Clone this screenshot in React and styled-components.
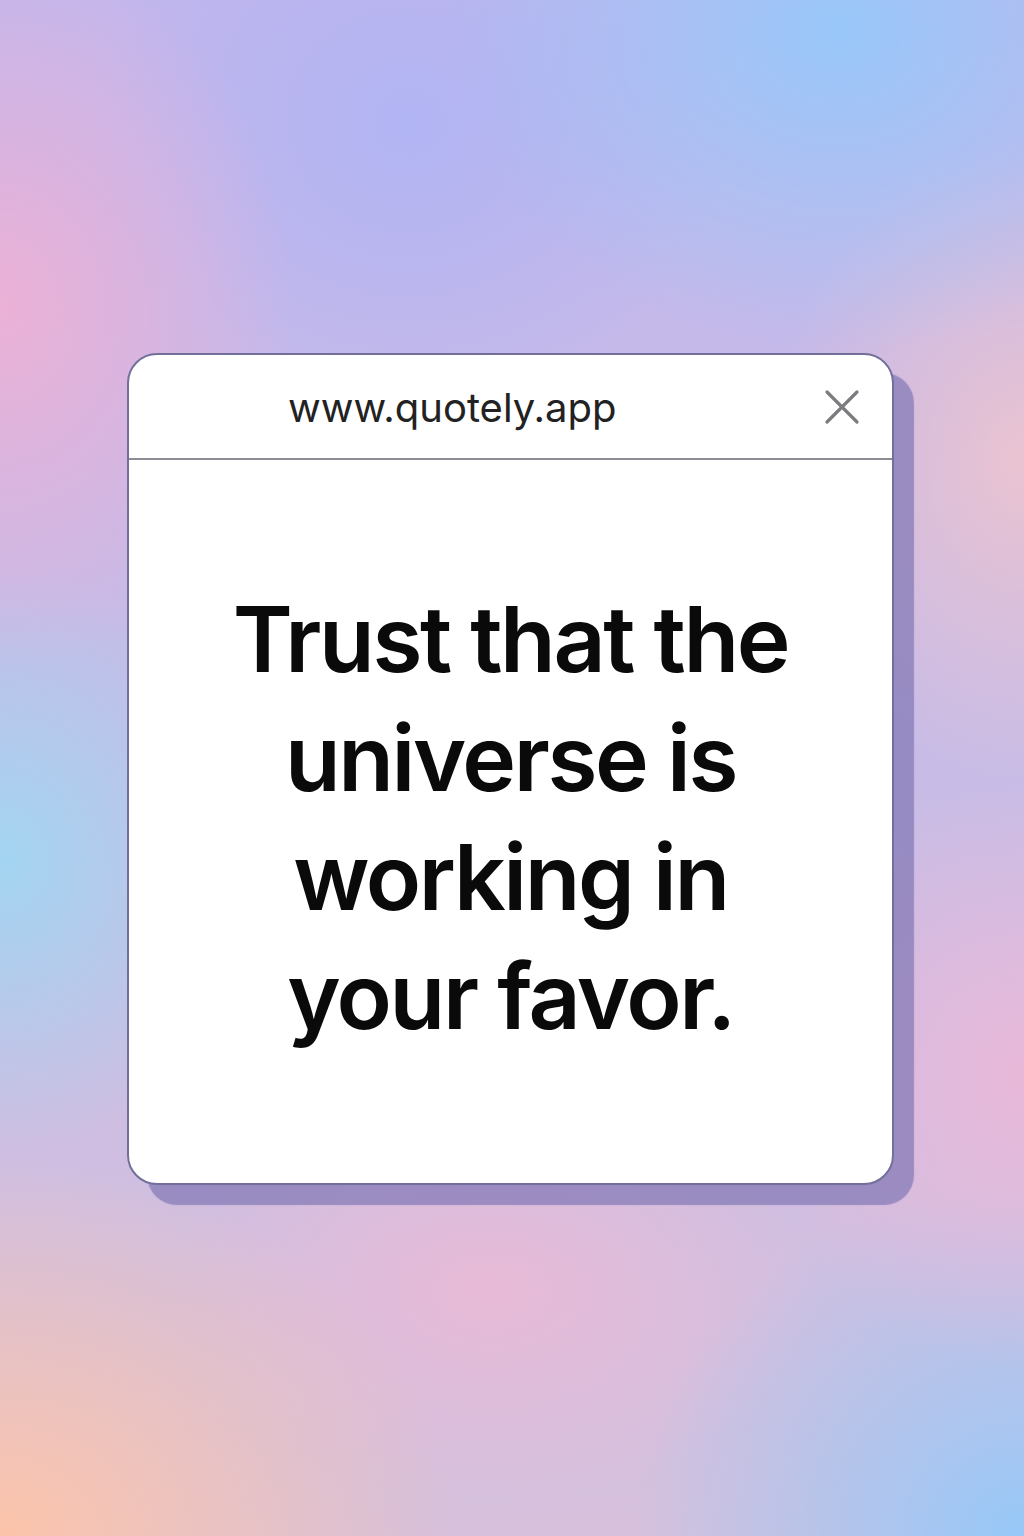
import styled, { createGlobalStyle } from "styled-components";

const GlobalStyle = createGlobalStyle`
  html, body {
    margin: 0;
    padding: 0;
  }
  body {
    font-family: Inter, "Noto Sans", "Liberation Sans", sans-serif;
  }
`;

const Page = styled.div`
  width: 1024px;
  height: 1536px;
  box-sizing: border-box;
  padding: 353px 3px 0 0;
  display: flex;
  justify-content: center;
  align-items: flex-start;
  background:
    radial-gradient(ellipse 420px 520px at 0% 20%, rgba(240, 176, 212, 0.9), transparent 70%),
    radial-gradient(ellipse 380px 420px at 0% 56%, rgba(160, 214, 242, 0.95), transparent 70%),
    radial-gradient(ellipse 640px 520px at 0% 100%, rgba(252, 196, 170, 1), transparent 72%),
    radial-gradient(ellipse 560px 460px at 82% 2%, rgba(150, 200, 250, 0.95), transparent 70%),
    radial-gradient(ellipse 360px 460px at 100% 30%, rgba(238, 196, 206, 0.9), transparent 70%),
    radial-gradient(ellipse 380px 420px at 100% 70%, rgba(236, 184, 216, 0.9), transparent 70%),
    radial-gradient(ellipse 560px 500px at 100% 100%, rgba(150, 200, 248, 1), transparent 70%),
    radial-gradient(ellipse 460px 300px at 48% 84%, rgba(236, 186, 214, 0.85), transparent 70%),
    radial-gradient(ellipse 460px 420px at 40% 8%, rgba(176, 180, 244, 0.95), transparent 70%),
    linear-gradient(180deg, #c2b6ec 0%, #c8bce6 50%, #d6c0dc 100%);
`;

const Card = styled.div`
  width: 767px;
  height: 832px;
  box-sizing: border-box;
  background: #fff;
  border: 2px solid #72709a;
  border-radius: 30px;
  box-shadow: 20px 20px 1px rgba(130, 120, 182, 0.72);
  display: flex;
  flex-direction: column;
  overflow: hidden;
`;

const Header = styled.div`
  height: 103px;
  flex-shrink: 0;
  display: flex;
  align-items: center;
  padding: 0 30px 0 159px;
  border-bottom: 2px solid #8c8c94;
`;

const Url = styled.div`
  flex: 1;
  font-size: 40px;
  font-weight: 400;
  color: #222;
  letter-spacing: 0;
  padding-top: 2px;
`;

const CloseButton = styled.button`
  border: 0;
  background: none;
  padding: 0;
  width: 40px;
  height: 40px;
  display: flex;
  align-items: center;
  justify-content: center;
  cursor: pointer;
`;

const Body = styled.div`
  flex: 1;
  display: flex;
  align-items: center;
  justify-content: center;
  padding-bottom: 8px;
`;

const Quote = styled.p`
  margin: 0;
  text-align: center;
  font-size: 91px;
  line-height: 119px;
  font-weight: 600;
  letter-spacing: -2.4px;
  color: #0a0a0a;
`;

const Line = styled.span`
  display: block;
  white-space: nowrap;
`;

const lines = ["Trust that the", "universe is", "working in", "your favor."];

export default function App() {
  return (
    <>
      <GlobalStyle />
      <Page>
        <Card>
          <Header>
            <Url>www.quotely.app</Url>
            <CloseButton aria-label="Close">
              <svg width="36" height="36" viewBox="0 0 36 36">
                <path d="M3 3 L33 33 M33 3 L3 33" stroke="#7c7c80" strokeWidth="3.2" strokeLinecap="round" />
              </svg>
            </CloseButton>
          </Header>
          <Body>
            <Quote>
              {lines.map((l) => (
                <Line key={l}>{l}</Line>
              ))}
            </Quote>
          </Body>
        </Card>
      </Page>
    </>
  );
}
